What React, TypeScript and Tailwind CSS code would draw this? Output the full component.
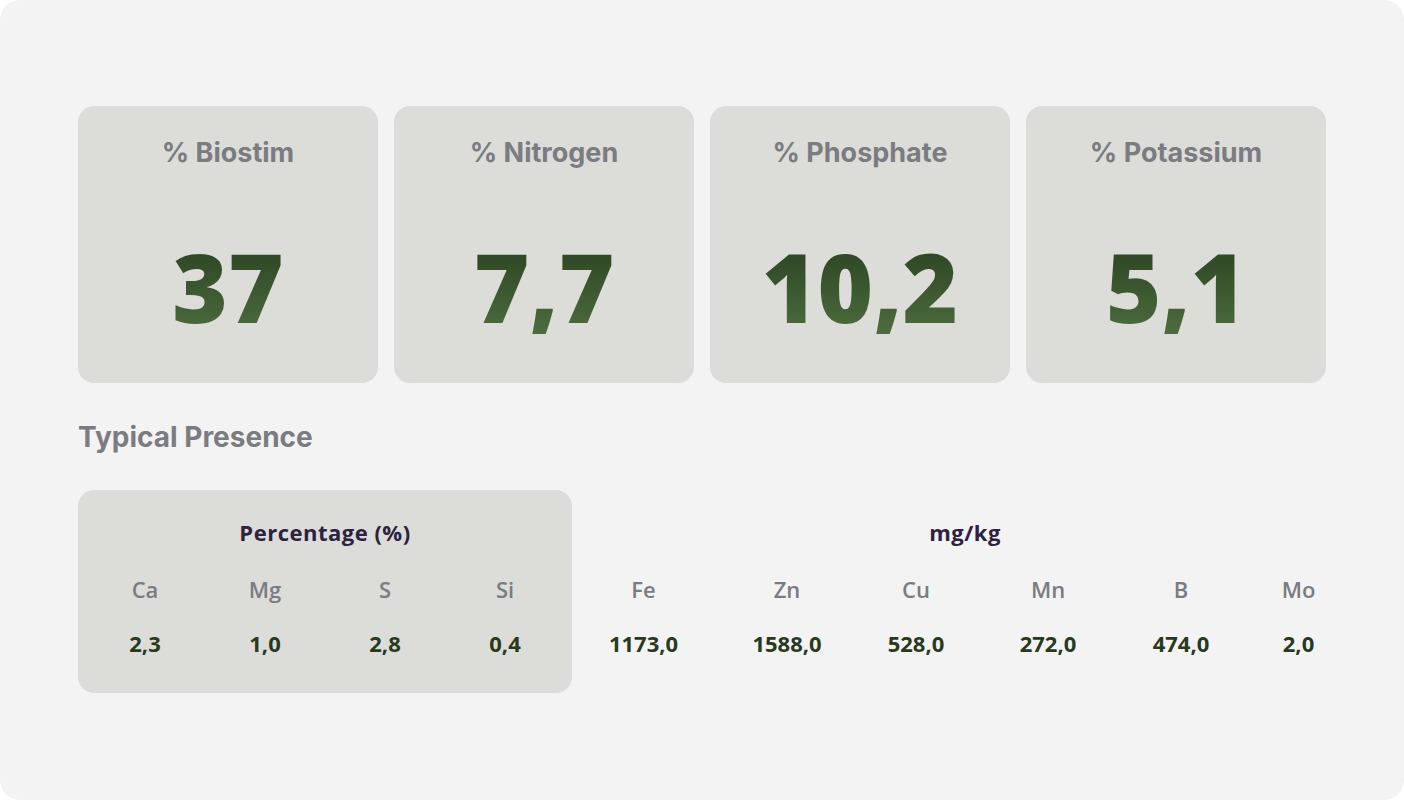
const stats = [
  { label: "% Biostim", value: "37" },
  { label: "% Nitrogen", value: "7,7" },
  { label: "% Phosphate", value: "10,2" },
  { label: "% Potassium", value: "5,1" },
];

const percent = [
  { el: "Ca", v: "2,3" },
  { el: "Mg", v: "1,0" },
  { el: "S", v: "2,8" },
  { el: "Si", v: "0,4" },
];

// column widths follow the auto table layout of the original
const mgkg = [
  { el: "Fe", v: "1173,0", w: "w-[143px]" },
  { el: "Zn", v: "1588,0", w: "w-[144px]" },
  { el: "Cu", v: "528,0", w: "w-[114px]" },
  { el: "Mn", v: "272,0", w: "w-[150px]" },
  { el: "B", v: "474,0", w: "w-[116px]" },
  { el: "Mo", v: "2,0", w: "w-[119px]" },
];

const inter = "font-['Inter',sans-serif]";
const geo = "font-['Open_Sans',sans-serif]";

function StatCard({ label, value }: { label: string; value: string }) {
  return (
    <div className="flex h-[277px] w-[300px] flex-col items-center rounded-2xl bg-[#dcdcd8] pt-8">
      <div className={`${inter} text-[27px] leading-[30px] font-bold text-[#7b7b82]`}>
        {label}
      </div>
      <div
        className={`${geo} mt-[71px] bg-linear-to-b from-[#2a4222] to-[#4c6c3d] bg-clip-text text-[95px] leading-[95px] font-extrabold text-transparent`}
      >
        {value}
      </div>
    </div>
  );
}

function Column({ el, v, w }: { el: string; v: string; w: string }) {
  return (
    <div className={`${w} flex flex-col items-center`}>
      <div className="mt-[29px] text-[22px] leading-7 font-semibold text-[#7b7b82]">{el}</div>
      <div className="mt-[26px] text-[22px] leading-7 font-bold text-[#283a1d]">{v}</div>
    </div>
  );
}

export default function App() {
  return (
    <div className="bg-white">
      <div className="h-[800px] w-[1404px] rounded-[20px] bg-[#f3f3f3] px-[78px] pt-[106px]">
        <div className="flex gap-4">
          {stats.map((s) => (
            <StatCard key={s.label} {...s} />
          ))}
        </div>

        <h2 className={`${inter} mt-[38px] text-[28px] leading-8 font-bold text-[#7b7b82]`}>
          Typical Presence
        </h2>

        <div className={`${geo} mt-[37px] flex`}>
          <div className="h-[203px] w-[494px] rounded-2xl bg-[#dcdcd8] px-[7px] pt-7">
            <div className="text-center text-[22px] leading-7 font-bold tracking-[0.5px] text-[#2d2240]">
              Percentage (%)
            </div>
            <div className="flex">
              {percent.map((p) => (
                <Column key={p.el} el={p.el} v={p.v} w="w-[120px]" />
              ))}
            </div>
          </div>
          <div className="pt-7">
            <div className="text-center text-[22px] leading-7 font-bold tracking-[0.5px] text-[#2d2240]">
              mg/kg
            </div>
            <div className="flex">
              {mgkg.map((p) => (
                <Column key={p.el} {...p} />
              ))}
            </div>
          </div>
        </div>
      </div>
    </div>
  );
}
